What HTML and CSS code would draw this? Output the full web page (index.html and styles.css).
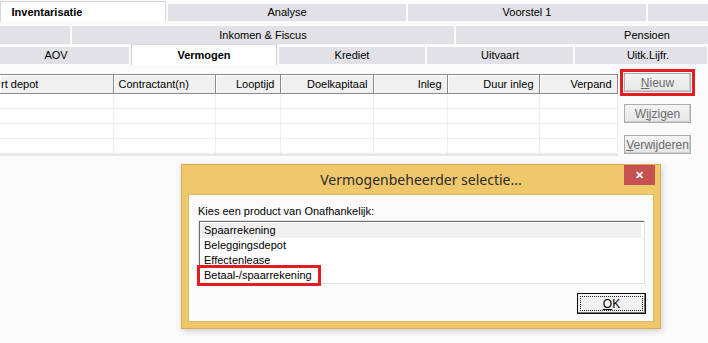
FILE: index.html
```html
<!DOCTYPE html>
<html lang="nl">

<head>
    <meta charset="UTF-8" />
    <title>Vermogen</title>
    <link rel="stylesheet" href="styles.css">
</head>

<body>
    <div class="tabs">
        <div class="tabrow row1">
            <div class="tab active first">Inventarisatie</div>
            <div class="tab">Analyse</div>
            <div class="tab">Voorstel 1</div>
            <div class="tab last"></div>
        </div>
        <div class="tabrow row2">
            <div class="tab first"></div>
            <div class="tab">Inkomen &amp; Fiscus</div>
            <div class="tab last">Pensioen</div>
        </div>
        <div class="tabrow row3">
            <div class="tab first">AOV</div>
            <div class="tab active">Vermogen</div>
            <div class="tab">Krediet</div>
            <div class="tab">Uitvaart</div>
            <div class="tab last">Uitk.Lijfr.</div>
        </div>
    </div>

    <div class="content">
        <div class="grid-wrap">
            <table class="grid">
                <colgroup>
                    <col style="width: 113px">
                    <col style="width: 102px">
                    <col style="width: 65px">
                    <col style="width: 93px">
                    <col style="width: 74px">
                    <col style="width: 92px">
                    <col style="width: 78px">
                </colgroup>
                <thead>
                    <tr>
                        <th class="cut">rt depot</th>
                        <th>Contractant(n)</th>
                        <th class="num">Looptijd</th>
                        <th class="num">Doelkapitaal</th>
                        <th class="num">Inleg</th>
                        <th class="num">Duur inleg</th>
                        <th class="num">Verpand</th>
                    </tr>
                </thead>
                <tbody>
                    <tr><td></td><td></td><td></td><td></td><td></td><td></td><td></td></tr>
                    <tr><td></td><td></td><td></td><td></td><td></td><td></td><td></td></tr>
                    <tr><td></td><td></td><td></td><td></td><td></td><td></td><td></td></tr>
                    <tr><td></td><td></td><td></td><td></td><td></td><td></td><td></td></tr>
                </tbody>
            </table>
        </div>

        <div class="actions">
            <button class="btn marked"><u>N</u>ieuw</button>
            <button class="btn">W<u>i</u>jzigen</button>
            <button class="btn"><u>V</u>erwijderen</button>
        </div>
    </div>

    <div class="dialog">
        <div class="dialog-title">
            <span>Vermogenbeheerder selectie...</span>
            <button class="close">&#x2715;</button>
        </div>
        <div class="dialog-body">
            <div class="prompt">Kies een product van Onafhankelijk:</div>
            <div class="listbox">
                <div class="item selected">Spaarrekening</div>
                <div class="item">Beleggingsdepot</div>
                <div class="item">Effectenlease</div>
                <div class="item"><span class="marked-text">Betaal-/spaarrekening</span></div>
            </div>
            <div class="dialog-foot">
                <button class="ok"><span><u>O</u>K</span></button>
            </div>
        </div>
    </div>
</body>

</html>
```

FILE: styles.css
```css
body {
    margin: 0;
    background: #fbfbfb;
    color: #000;
    font-family: 'Liberation Sans', Arial, sans-serif;
    font-size: 11px;
    width: 708px;
    height: 343px;
    overflow: hidden;
    position: relative;
}

/* tabs */
.tabrow {
    display: flex;
    gap: 2px;
    align-items: flex-start;
    height: 21px;
}

.tab {
    flex: 0 0 auto;
    box-sizing: border-box;
    background: #e1e1e6;
    text-align: center;
    height: 17px;
    line-height: 17px;
    margin-top: 3px;
}

.tab.active {
    background: #fff;
    border: 1px solid #d6d6d6;
    border-bottom: none;
    height: 21px;
    margin-top: 0;
    padding-top: 2px;
    font-weight: bold;
}

.row1 {
    margin-top: 1px;
}

.row1 .tab {
    width: 238px;
}

.row1 .first {
    width: 166px;
    padding-right: 72px;
}

.row1 .last {
    width: 60px;
}

.row2 {
    margin-top: 1px;
}

.row2 .tab {
    width: 382px;
    height: 18px;
    line-height: 18px;
}

.row2 .first {
    width: 70px;
}

.row2 .last {
    width: 252px;
    padding-left: 130px;
}

.row3 .tab {
    width: 146px;
}

.row3 .first {
    width: 129px;
    padding-right: 17px;
}

.row3 .last {
    width: 132px;
    padding-left: 14px;
}

/* grid */
.content {
    display: flex;
    align-items: flex-start;
    margin-top: 9px;
}

.grid-wrap {
    width: 617px;
    border-bottom: 2px solid #e6e6e6;
    border-right: 1px solid #e6e6e6;
}

.grid {
    table-layout: fixed;
    width: 617px;
    border-collapse: collapse;
}

.grid th {
    height: 19px;
    box-sizing: border-box;
    padding: 0 5px;
    background: #f0f0f0;
    border: 1px solid #8a8a8a;
    box-shadow: inset 1px 1px #fff;
    font-weight: normal;
    text-align: left;
    white-space: nowrap;
    overflow: hidden;
}

.grid th.cut {
    border-left: none;
    padding-left: 1px;
}

.grid th.num {
    text-align: right;
}

.grid td {
    height: 14px;
    padding: 0;
    background: #fff;
    border-right: 1px solid #ececec;
    border-bottom: 1px solid #ececec;
}

/* buttons */
.actions {
    display: flex;
    flex-direction: column;
    gap: 12px;
    margin-left: 6px;
    margin-top: -1px;
}

.btn {
    width: 67px;
    height: 19px;
    padding: 0;
    font: inherit;
    font-size: 12px;
    color: #6b6b6b;
    background: linear-gradient(#f4f4f4, #e6e6e6);
    border: 1px solid #acacac;
    box-shadow: inset -1px -1px #cfcfcf;
}

.btn.marked {
    outline: 3px solid #e51b24;
    outline-offset: 1px;
}

/* dialog */
.dialog {
    position: absolute;
    left: 181px;
    top: 164px;
    width: 480px;
    height: 165px;
    box-sizing: border-box;
    background: #f0c86c;
    border: 1px solid #d8ac52;
    box-shadow: 1px 2px 6px rgba(0, 0, 0, 0.18);
    padding: 0 6px 6px;
    display: flex;
    flex-direction: column;
}

.dialog-title {
    position: relative;
    height: 29px;
    text-align: center;
    font-family: 'Noto Sans', 'Open Sans', sans-serif;
    font-size: 14px;
    line-height: 30px;
    color: #2b2b2b;
}

.close {
    position: absolute;
    right: -1px;
    top: 0;
    width: 31px;
    height: 20px;
    padding: 0;
    border: none;
    background: #c75050;
    color: #fff;
    font-size: 11px;
    font-weight: bold;
    line-height: 20px;
}

.dialog-body {
    flex: 1;
    background: #fbfbfb;
    border: 1px solid #ddb868;
    padding: 9px 8px 0 9px;
}

.prompt {
    height: 16px;
    line-height: 14px;
}

.listbox {
    height: 64px;
    box-sizing: border-box;
    background: #fff;
    border: 1px solid #e2e2e2;
    box-shadow: inset 1px 1px #6e6e6e;
    padding: 2px 3px 0 1px;
}

.item {
    height: 15px;
    line-height: 15px;
    padding-left: 4px;
}

.item.selected {
    background: #f0f0f0;
}

.marked-text {
    display: inline-block;
    margin-left: -4px;
    padding: 0 6px 0 4px;
    outline: 3px solid #e51b24;
}

.dialog-foot {
    display: flex;
    justify-content: flex-end;
    margin-top: 9px;
}

.ok {
    width: 69px;
    height: 21px;
    margin-right: -1px;
    padding: 2px;
    font: inherit;
    font-size: 12px;
    background: #f2f2f2;
    border: 1px solid #111;
    box-shadow: inset -1px -1px #777;
}

.ok span {
    display: block;
    height: 15px;
    line-height: 14px;
    box-sizing: border-box;
    border: 1px dotted #222;
}
```
